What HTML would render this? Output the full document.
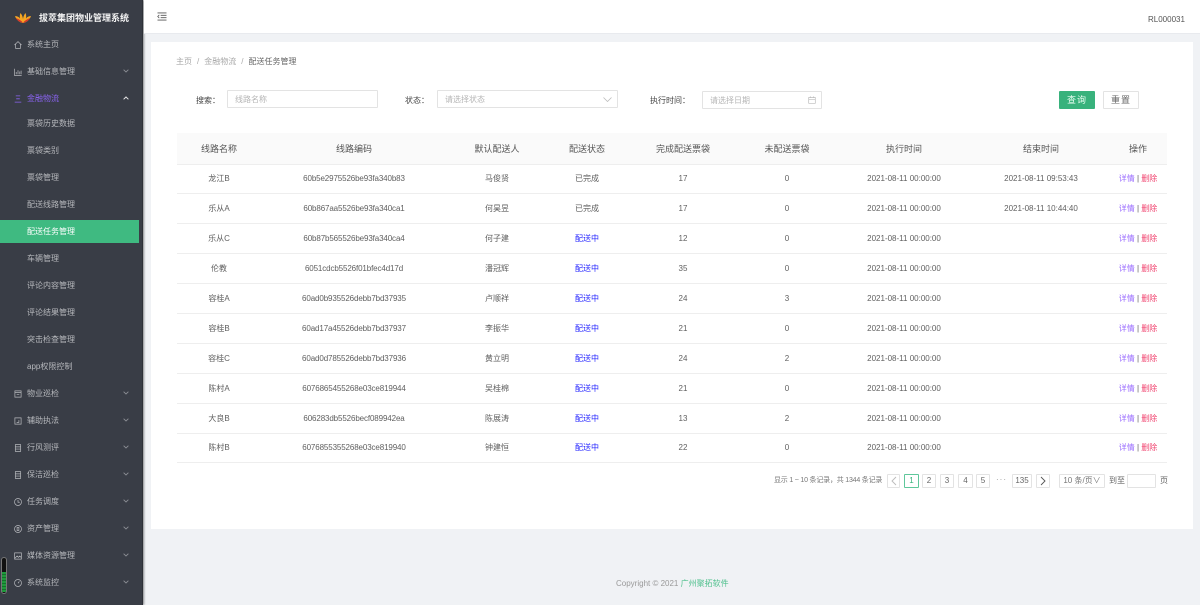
<!DOCTYPE html>
<html lang="zh"><head><meta charset="utf-8"><title>配送任务管理</title>
<style>
*{box-sizing:border-box;margin:0;padding:0}
html,body{width:1200px;height:605px;overflow:hidden;background:#f0f2f5;font-family:"Liberation Sans","Noto Sans CJK SC",sans-serif;font-size:8px;color:#666}
body{filter:blur(.25px)}
.a{position:absolute;white-space:nowrap}
#side{position:absolute;left:0;top:0;width:143px;height:605px;background:#393d46;box-shadow:1px 0 2px rgba(0,0,0,.45);border-right:1px solid #2e3138}
.m{position:absolute;left:27px;margin-top:1px;font-size:8px;line-height:12px;color:#b6b8bc;white-space:nowrap}
.ic{position:absolute;left:14px;margin-top:1px;width:8px;height:8px}
.ch{position:absolute;left:123px;width:6px;height:4px}
#active{position:absolute;left:0;top:220px;width:139px;height:23px;background:#3fba81}
#top{position:absolute;left:144px;top:0;width:1056px;height:34px;background:#fff;border-bottom:1px solid #e8eaee}
#card{position:absolute;left:151px;top:42px;width:1042px;height:487px;background:#fff}
.inp{position:absolute;top:90px;height:18px;border:1px solid #e3e3e3;background:#fff;font-size:8px;line-height:17px;color:#b5b5b5;padding-left:7px;border-radius:1px}
.lbl{position:absolute;top:95px;font-size:8px;line-height:12px;color:#444;white-space:nowrap}
table{position:absolute;left:177px;top:133px;width:990px;border-collapse:collapse;table-layout:fixed;font-size:8px;color:#606060}
th{height:31px;background:#fafafa;font-weight:400;font-size:9px;color:#555;border-bottom:1px solid #eee;text-align:center}
td{height:29.9px;text-align:center;border-bottom:1px solid #eee;padding:0;white-space:nowrap}
td:nth-child(2){letter-spacing:-.12px}
.b{color:#2424ff}.p{color:#9a6cff}.r{color:#f0426e}
.pg{position:absolute;top:474px;height:14px;border:1px solid #e3e3e3;font-size:8px;line-height:12px;text-align:center;color:#666;border-radius:1px;background:#fff}
</style></head><body>
<div id="side">
<svg class="a" style="left:15px;top:13px" width="16" height="10" viewBox="0 0 16 10"><path d="M8 10C5 9.500 1.500 7.500 0 3 2.500 3.200 4 4 5 5.500 4.600 3.500 4.800 1.500 5.500 0 6.800 1.500 7.700 3.500 8 6 8.300 3.500 9.200 1.500 10.500 0 11.200 1.500 11.400 3.500 11 5.500 12 4 13.500 3.200 16 3 14.500 7.500 11 9.500 8 10Z" fill="#f5a623"/><path d="M8 10C5.500 9.200 2.500 8 .8 5 3.500 6 6.500 7.500 8 10ZM8 10C10.500 9.200 13.500 8 15.200 5 12.500 6 9.500 7.500 8 10Z" fill="#d8332a"/></svg>
<div class="a" style="left:39px;top:12px;font-size:9px;line-height:13px;font-weight:700;color:#f4f4f4">拔萃集团物业管理系统</div>

<svg class="ic" style="top:40px" viewBox="0 0 9 9" fill="none" stroke="#b6b8bc" stroke-width=".8"><path d="M.5 4.500 4.500.7 8.500 4.500M1.800 3.500V8.300H7.200V3.500"/></svg>
<div class="m" style="top:38px">系统主页</div>
<svg class="ic" style="top:67px" viewBox="0 0 9 9" fill="none" stroke="#b6b8bc" stroke-width=".8"><path d="M.6.800V8.400H8.600M2.500 7V4.500M4.500 7V2.500M6.500 7V4M8 7V3"/></svg>
<div class="m" style="top:65px">基础信息管理</div>
<svg class="ch" style="top:69px" viewBox="0 0 6 4" fill="none" stroke="#8b8e94" stroke-width=".9"><path d="M.6.700 3 3 5.400.700"/></svg>
<svg class="ic" style="top:94px" viewBox="0 0 9 9" fill="none" stroke="#8a63f0" stroke-width=".9"><path d="M2 1H7M2.500 4.300H6.500M.8 8H8.200"/></svg>
<div class="m" style="top:92px;color:#8a63f0">金融物流</div>
<svg class="ch" style="top:96px" viewBox="0 0 6 4" fill="none" stroke="#e6e6e6" stroke-width="1"><path d="M.6 3.300 3 1 5.400 3.300"/></svg>

<div class="m" style="top:117px">票袋历史数据</div>
<div class="m" style="top:144px">票袋类别</div>
<div class="m" style="top:171px">票袋管理</div>
<div class="m" style="top:198px">配送线路管理</div>
<div id="active"></div>
<div class="m" style="top:225px;color:#fff">配送任务管理</div>
<div class="m" style="top:252px">车辆管理</div>
<div class="m" style="top:279px">评论内容管理</div>
<div class="m" style="top:306px">评论结果管理</div>
<div class="m" style="top:333px">突击检查管理</div>
<div class="m" style="top:360px">app权限控制</div>

<svg class="ic" style="top:389px" viewBox="0 0 9 9" fill="none" stroke="#b6b8bc" stroke-width=".8"><path d="M1 1H8V8H1ZM1 3H8M3 5H6"/></svg>
<div class="m" style="top:387px">物业巡检</div>
<svg class="ch" style="top:391px" viewBox="0 0 6 4" fill="none" stroke="#8b8e94" stroke-width=".9"><path d="M.6.700 3 3 5.400.700"/></svg>
<svg class="ic" style="top:416px" viewBox="0 0 9 9" fill="none" stroke="#b6b8bc" stroke-width=".8"><path d="M1 1H8V8H1ZM3 6H5.500V3.500"/></svg>
<div class="m" style="top:414px">辅助执法</div>
<svg class="ch" style="top:418px" viewBox="0 0 6 4" fill="none" stroke="#8b8e94" stroke-width=".9"><path d="M.6.700 3 3 5.400.700"/></svg>
<svg class="ic" style="top:443px" viewBox="0 0 9 9" fill="none" stroke="#b6b8bc" stroke-width=".8"><path d="M1.500.700H7.500V8.300H1.500ZM1.500 3.200H7.500M1.500 5.700H7.500"/></svg>
<div class="m" style="top:441px">行风测评</div>
<svg class="ch" style="top:445px" viewBox="0 0 6 4" fill="none" stroke="#8b8e94" stroke-width=".9"><path d="M.6.700 3 3 5.400.700"/></svg>
<svg class="ic" style="top:470px" viewBox="0 0 9 9" fill="none" stroke="#b6b8bc" stroke-width=".8"><path d="M1.500.700H7.500V8.300H1.500ZM1.500 3.200H7.500M1.500 5.700H7.500"/></svg>
<div class="m" style="top:468px">保洁巡检</div>
<svg class="ch" style="top:472px" viewBox="0 0 6 4" fill="none" stroke="#8b8e94" stroke-width=".9"><path d="M.6.700 3 3 5.400.700"/></svg>
<svg class="ic" style="top:497px" viewBox="0 0 9 9" fill="none" stroke="#b6b8bc" stroke-width=".8"><circle cx="4.500" cy="4.500" r="3.900"/><path d="M4.500 2.200V4.800H6.500"/></svg>
<div class="m" style="top:495px">任务调度</div>
<svg class="ch" style="top:499px" viewBox="0 0 6 4" fill="none" stroke="#8b8e94" stroke-width=".9"><path d="M.6.700 3 3 5.400.700"/></svg>
<svg class="ic" style="top:524px" viewBox="0 0 9 9" fill="none" stroke="#b6b8bc" stroke-width=".8"><circle cx="4.500" cy="4.500" r="3.900"/><path d="M3.500 2.800H5.500V6.200H3.500Z"/></svg>
<div class="m" style="top:522px">资产管理</div>
<svg class="ch" style="top:526px" viewBox="0 0 6 4" fill="none" stroke="#8b8e94" stroke-width=".9"><path d="M.6.700 3 3 5.400.700"/></svg>
<svg class="ic" style="top:551px" viewBox="0 0 9 9" fill="none" stroke="#b6b8bc" stroke-width=".8"><path d="M.7 1H8.300V8H.7ZM1 7 3.500 4.500 5 6 6.500 4.500 8.300 6.500"/></svg>
<div class="m" style="top:549px">媒体资源管理</div>
<svg class="ch" style="top:553px" viewBox="0 0 6 4" fill="none" stroke="#8b8e94" stroke-width=".9"><path d="M.6.700 3 3 5.400.700"/></svg>
<svg class="ic" style="top:578px" viewBox="0 0 9 9" fill="none" stroke="#b6b8bc" stroke-width=".8"><circle cx="4.500" cy="4.500" r="3.900"/><path d="M4.500 4.800 6 2.800"/></svg>
<div class="m" style="top:576px">系统监控</div>
<svg class="ch" style="top:580px" viewBox="0 0 6 4" fill="none" stroke="#8b8e94" stroke-width=".9"><path d="M.6.700 3 3 5.400.700"/></svg>

<div class="a" style="left:1px;top:557px;width:6px;height:37px;background:#111;border:1px solid #777;border-radius:3px;overflow:hidden"><div style="position:absolute;left:0;right:0;top:14px;bottom:1px;background:repeating-linear-gradient(#1f9a3c 0 2px,#15702c 2px 3px)"></div></div>
</div>

<div id="top">
<svg class="a" style="left:13px;top:12px" width="10" height="9" viewBox="0 0 11 10" fill="none" stroke="#555" stroke-width="1"><path d="M.5 1H10.500M4 3.700H10.500M4 6.300H10.500M.5 9H10.500"/><path d="M2.500 3.200.8 5 2.500 6.800" stroke-width=".9"/></svg>
<div class="a" style="left:1004px;top:14px;line-height:12px;color:#555">RL000031</div>
</div>

<div id="card"></div>
<div class="a" style="left:176px;top:56px;line-height:12px;color:#a9a9a9">主页<span style="margin:0 5px">/</span>金融物流<span style="margin:0 5px">/</span><span style="color:#666">配送任务管理</span></div>

<div class="lbl" style="left:196px">搜索：</div>
<div class="inp" style="left:227px;width:151px">线路名称</div>
<div class="lbl" style="left:405px">状态：</div>
<div class="inp" style="left:437px;width:181px">请选择状态</div>
<svg class="a" style="left:603px;top:97px" width="9" height="5" viewBox="0 0 9 5" fill="none" stroke="#bbb" stroke-width=".8"><path d="M.5.500 4.500 4.500 8.500.5"/></svg>
<div class="lbl" style="left:650px">执行时间：</div>
<div class="inp" style="left:702px;width:120px;top:91px">请选择日期</div>
<svg class="a" style="left:808px;top:96px" width="8" height="8" viewBox="0 0 8 8" fill="none" stroke="#bbb" stroke-width=".7"><path d="M.7 1.500H7.300V7.300H.7ZM.7 3.300H7.300M2.300.4V2M5.700.4V2"/></svg>
<div class="a" style="left:1059px;top:91px;width:36px;height:18px;background:#38b27c;color:#eafff3;font-size:9px;line-height:18px;text-align:center;letter-spacing:1px;border-radius:1px">查询</div>
<div class="a" style="left:1103px;top:91px;width:36px;height:18px;background:#fff;border:1px solid #e3e3e3;color:#666;font-size:9px;line-height:16px;text-align:center;letter-spacing:1px;border-radius:1px">重置</div>

<table>
<colgroup><col style="width:84px"><col style="width:186px"><col style="width:100px"><col style="width:80px"><col style="width:112px"><col style="width:96px"><col style="width:138px"><col style="width:136px"><col style="width:58px"></colgroup>
<tr><th>线路名称</th><th>线路编码</th><th>默认配送人</th><th>配送状态</th><th>完成配送票袋</th><th>未配送票袋</th><th>执行时间</th><th>结束时间</th><th>操作</th></tr>
<tr><td>龙江B</td><td>60b5e2975526be93fa340b83</td><td>马俊贤</td><td>已完成</td><td>17</td><td>0</td><td>2021-08-11 00:00:00</td><td>2021-08-11 09:53:43</td><td><span class="p">详情</span> | <span class="r">删除</span></td></tr>
<tr><td>乐从A</td><td>60b867aa5526be93fa340ca1</td><td>何昊昱</td><td>已完成</td><td>17</td><td>0</td><td>2021-08-11 00:00:00</td><td>2021-08-11 10:44:40</td><td><span class="p">详情</span> | <span class="r">删除</span></td></tr>
<tr><td>乐从C</td><td>60b87b565526be93fa340ca4</td><td>何子建</td><td class="b">配送中</td><td>12</td><td>0</td><td>2021-08-11 00:00:00</td><td></td><td><span class="p">详情</span> | <span class="r">删除</span></td></tr>
<tr><td>伦教</td><td>6051cdcb5526f01bfec4d17d</td><td>潘冠辉</td><td class="b">配送中</td><td>35</td><td>0</td><td>2021-08-11 00:00:00</td><td></td><td><span class="p">详情</span> | <span class="r">删除</span></td></tr>
<tr><td>容桂A</td><td>60ad0b935526debb7bd37935</td><td>卢顺祥</td><td class="b">配送中</td><td>24</td><td>3</td><td>2021-08-11 00:00:00</td><td></td><td><span class="p">详情</span> | <span class="r">删除</span></td></tr>
<tr><td>容桂B</td><td>60ad17a45526debb7bd37937</td><td>李振华</td><td class="b">配送中</td><td>21</td><td>0</td><td>2021-08-11 00:00:00</td><td></td><td><span class="p">详情</span> | <span class="r">删除</span></td></tr>
<tr><td>容桂C</td><td>60ad0d785526debb7bd37936</td><td>黄立明</td><td class="b">配送中</td><td>24</td><td>2</td><td>2021-08-11 00:00:00</td><td></td><td><span class="p">详情</span> | <span class="r">删除</span></td></tr>
<tr><td>陈村A</td><td>6076865455268e03ce819944</td><td>吴桂棉</td><td class="b">配送中</td><td>21</td><td>0</td><td>2021-08-11 00:00:00</td><td></td><td><span class="p">详情</span> | <span class="r">删除</span></td></tr>
<tr><td>大良B</td><td>606283db5526becf089942ea</td><td>陈展涛</td><td class="b">配送中</td><td>13</td><td>2</td><td>2021-08-11 00:00:00</td><td></td><td><span class="p">详情</span> | <span class="r">删除</span></td></tr>
<tr><td>陈村B</td><td>6076855355268e03ce819940</td><td>钟建恒</td><td class="b">配送中</td><td>22</td><td>0</td><td>2021-08-11 00:00:00</td><td></td><td><span class="p">详情</span> | <span class="r">删除</span></td></tr>
</table>

<div class="a" style="left:774px;top:475px;font-size:7px;line-height:12px;letter-spacing:-.2px;color:#777">显示 1 ~ 10 条记录，共 1344 条记录</div>
<div class="pg" style="left:887px;width:13px"><svg width="6" height="10" viewBox="0 0 6 10" fill="none" stroke="#bbb" stroke-width=".9" style="margin-top:1px"><path d="M5 1 1 5 5 9"/></svg></div>
<div class="pg" style="left:904px;width:15px;border-color:#5fc79b;color:#38b27c">1</div>
<div class="pg" style="left:922px;width:14px">2</div>
<div class="pg" style="left:940px;width:14px">3</div>
<div class="pg" style="left:958px;width:15px">4</div>
<div class="pg" style="left:976px;width:14px">5</div>
<div class="a" style="left:996px;top:475px;line-height:10px;color:#999;letter-spacing:1px">···</div>
<div class="pg" style="left:1012px;width:20px">135</div>
<div class="pg" style="left:1036px;width:14px"><svg width="6" height="10" viewBox="0 0 6 10" fill="none" stroke="#555" stroke-width=".9" style="margin-top:1px"><path d="M1 1 5 5 1 9"/></svg></div>
<div class="pg" style="left:1059px;width:46px;color:#777;font-size:8px">10 条/页∨</div>
<div class="a" style="left:1109px;top:475px;line-height:12px;color:#666">到至</div>
<div class="pg" style="left:1127px;width:29px"></div>
<div class="a" style="left:1160px;top:475px;line-height:12px;color:#666">页</div>

<div class="a" style="left:616px;top:578px;line-height:12px;color:#999">Copyright © 2021 <span style="color:#4fc08d">广州聚拓软件</span></div>
</body></html>
